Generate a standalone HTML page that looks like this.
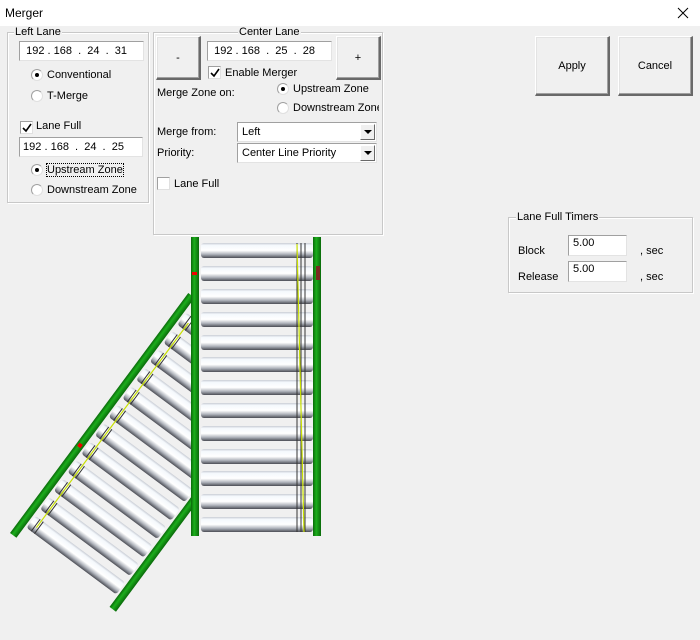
<!DOCTYPE html>
<html><head><meta charset="utf-8"><style>
*{margin:0;padding:0;box-sizing:border-box}
body{width:700px;height:640px;background:#f0f0f0;font-family:"Liberation Sans",sans-serif;font-size:11px;color:#000;position:relative;overflow:hidden}
.a{position:absolute;white-space:nowrap}
.title{left:0;top:0;width:700px;height:26px;background:#fff}
.gb{position:absolute;border:1px solid #c8c8c8;box-shadow:inset 1px 1px 0 #fff,1px 1px 0 #fff}
.gb>span{position:absolute;top:-7px;background:#f0f0f0;padding:0 1px;line-height:13px}
.ip{position:absolute;background:#fff;border:1px solid #a0a0a0;border-right-color:#e3e3e3;border-bottom-color:#e3e3e3;line-height:18px;font-size:11px}
.btn{position:absolute;background:#f0f0f0;border:1px solid #fff;border-right:2px solid #696969;border-bottom:2px solid #696969;box-shadow:inset -1px -1px 0 #a0a0a0, inset 1px 1px 0 #e3e3e3;text-align:center}
.rad{position:absolute;width:12px;height:12px;border-radius:50%;background:#fff;border:1px solid #a0a0a0;border-right-color:#e0e0e0;border-bottom-color:#e0e0e0}
.rad.on::after{content:"";position:absolute;left:3px;top:3px;width:4px;height:4px;border-radius:50%;background:#000}
.chk{position:absolute;width:13px;height:13px;background:#fff;border:1px solid #a0a0a0;border-right-color:#e0e0e0;border-bottom-color:#e0e0e0}
.combo{position:absolute;background:#fff;border:1px solid #a0a0a0;border-right-color:#e3e3e3;border-bottom-color:#e3e3e3;line-height:18px;padding-left:4px}
.combo i{position:absolute;right:1px;top:1px;width:15px;height:16px;background:#f0f0f0;border:1px solid #fff;border-right-color:#696969;border-bottom-color:#696969}
.combo i::after{content:"";position:absolute;left:3px;top:5px;border-left:4px solid transparent;border-right:4px solid transparent;border-top:4px solid #000}
</style></head><body>
<div class="a title"></div>
<div class="a" style="left:5px;top:6px;font-size:12px">Merger</div>
<svg class="a" style="left:677px;top:7px" width="12" height="12"><path d="M1 1L11 11M11 1L1 11" stroke="#000" stroke-width="1"/></svg>

<div class="gb" style="left:7px;top:32px;width:142px;height:171px"><span style="left:6px">Left Lane</span></div>
<div class="ip" style="left:19px;top:41px;width:125px;height:20px">&nbsp;&nbsp;192&nbsp;.&nbsp;168&nbsp;&nbsp;.&nbsp;&nbsp;24&nbsp;&nbsp;.&nbsp;&nbsp;31</div>
<div class="rad on" style="left:31px;top:69px"></div><div class="a" style="left:47px;top:69px">Conventional</div>
<div class="rad" style="left:31px;top:90px"></div><div class="a" style="left:47px;top:90px">T-Merge</div>
<div class="chk" style="left:20px;top:121px"></div><svg class="a" style="left:22px;top:123px" width="10" height="10"><path d="M1 5L4 8L9 1" stroke="#000" stroke-width="1.6" fill="none"/></svg><div class="a" style="left:36px;top:120px">Lane Full</div>
<div class="ip" style="left:19px;top:137px;width:124px;height:20px">&nbsp;192&nbsp;.&nbsp;168&nbsp;&nbsp;.&nbsp;&nbsp;24&nbsp;&nbsp;.&nbsp;&nbsp;25</div>
<div class="rad on" style="left:31px;top:164px"></div><div class="a" style="left:47px;top:164px;outline:1px dotted #000">Upstream Zone</div>
<div class="rad" style="left:31px;top:184px"></div><div class="a" style="left:47px;top:184px">Downstream Zone</div>

<div class="gb" style="left:153px;top:32px;width:230px;height:203px"><span style="left:84px">Center Lane</span></div>
<div class="btn" style="left:156px;top:36px;width:45px;height:44px;line-height:42px">-</div>
<div class="ip" style="left:207px;top:41px;width:125px;height:20px">&nbsp;&nbsp;192&nbsp;.&nbsp;168&nbsp;&nbsp;.&nbsp;&nbsp;25&nbsp;&nbsp;.&nbsp;&nbsp;28</div>
<div class="btn" style="left:336px;top:36px;width:45px;height:44px;line-height:42px">+</div>
<div class="chk" style="left:208px;top:66px"></div><svg class="a" style="left:210px;top:68px" width="10" height="10"><path d="M1 5L4 8L9 1" stroke="#000" stroke-width="1.6" fill="none"/></svg><div class="a" style="left:225px;top:67px">Enable Merger</div>
<div class="a" style="left:157px;top:87px">Merge Zone on:</div>
<div class="rad on" style="left:277px;top:83px"></div><div class="a" style="left:293px;top:83px">Upstream Zone</div>
<div class="rad" style="left:277px;top:102px"></div><div class="a" style="left:293px;top:102px;width:86px;overflow:hidden">Downstream Zone</div>
<div class="a" style="left:157px;top:126px">Merge from:</div>
<div class="combo" style="left:237px;top:122px;width:140px;height:20px">Left<i></i></div>
<div class="a" style="left:157px;top:147px">Priority:</div>
<div class="combo" style="left:237px;top:143px;width:140px;height:20px">Center Line Priority<i></i></div>
<div class="chk" style="left:157px;top:177px"></div><div class="a" style="left:174px;top:178px">Lane Full</div>

<div class="btn" style="left:535px;top:36px;width:75px;height:60px;line-height:58px">Apply</div>
<div class="btn" style="left:618px;top:36px;width:75px;height:60px;line-height:58px">Cancel</div>

<div class="gb" style="left:508px;top:217px;width:185px;height:76px"><span style="left:7px">Lane Full Timers</span></div>
<div class="a" style="left:518px;top:245px">Block</div>
<div class="ip" style="left:568px;top:235px;width:59px;height:21px;line-height:14px;padding-left:4px">5.00</div>
<div class="a" style="left:640px;top:245px">, sec</div>
<div class="a" style="left:518px;top:271px">Release</div>
<div class="ip" style="left:568px;top:261px;width:59px;height:21px;line-height:14px;padding-left:4px">5.00</div>
<div class="a" style="left:640px;top:271px">, sec</div>

<svg class="a" style="left:0;top:0" width="700" height="640">
<defs>
<linearGradient id="rg" x1="0" y1="0" x2="0" y2="1">
<stop offset="0" stop-color="#c8ccd4"/><stop offset="0.15" stop-color="#f4f8fc"/><stop offset="0.5" stop-color="#ffffff"/><stop offset="0.75" stop-color="#b0b4bc"/><stop offset="1" stop-color="#4a4c54"/>
</linearGradient>
<linearGradient id="rg2" x1="0" y1="0" x2="1" y2="0">
<stop offset="0" stop-color="#4a4c54"/><stop offset="0.25" stop-color="#b0b4bc"/><stop offset="0.5" stop-color="#ffffff"/><stop offset="0.85" stop-color="#f4f8fc"/><stop offset="1" stop-color="#c8ccd4"/>
</linearGradient>
<linearGradient id="gr" x1="0" y1="0" x2="1" y2="0">
<stop offset="0" stop-color="#0a6a0a"/><stop offset="0.4" stop-color="#1cae1c"/><stop offset="1" stop-color="#0a6a0a"/>
</linearGradient>
<linearGradient id="gr2" x1="0" y1="0" x2="0" y2="1">
<stop offset="0" stop-color="#0a6a0a"/><stop offset="0.4" stop-color="#1cae1c"/><stop offset="1" stop-color="#0a6a0a"/>
</linearGradient>
<clipPath id="cl"><rect x="0" y="0" width="191" height="640"/></clipPath>
</defs>
<g clip-path="url(#cl)">
<g transform="translate(10,533) rotate(-53.4)">
<g fill="url(#rg2)">
<rect x="14" y="10" width="15" height="112" rx="3"/>
<rect x="37" y="10" width="15" height="112" rx="3"/>
<rect x="60" y="10" width="15" height="112" rx="3"/>
<rect x="83" y="10" width="15" height="112" rx="3"/>
<rect x="106" y="10" width="15" height="112" rx="3"/>
<rect x="129" y="10" width="15" height="112" rx="3"/>
<rect x="152" y="10" width="15" height="112" rx="3"/>
<rect x="175" y="10" width="15" height="112" rx="3"/>
<rect x="198" y="10" width="15" height="112" rx="3"/>
<rect x="221" y="10" width="15" height="112" rx="3"/>
<rect x="244" y="10" width="15" height="112" rx="3"/>
<rect x="267" y="10" width="15" height="112" rx="3"/>
</g>
<g stroke="#333" stroke-width="1">
<path d="M14 16H29M14 20H29M37 16H52M37 20H52M60 16H75M60 20H75M83 16H98M83 20H98M106 16H121M106 20H121M129 16H144M129 20H144M152 16H167M152 20H167M175 16H190M175 20H190M198 16H213M198 20H213M221 16H236M221 20H236M244 16H259M244 20H259M267 16H282M267 20H282"/>
</g>
<path d="M20 18L275 18" stroke="#c8e000" stroke-width="1.2"/>
<rect x="0" y="0" width="299" height="8" fill="url(#gr2)"/>
<rect x="110" y="2" width="4" height="4" fill="#e00"/>
<rect x="0" y="124" width="299" height="8" fill="url(#gr2)"/>
</g>
</g>
<g fill="url(#rg)">
<rect x="201" y="243" width="112" height="15" rx="3"/>
<rect x="201" y="266" width="112" height="15" rx="3"/>
<rect x="201" y="289" width="112" height="15" rx="3"/>
<rect x="201" y="312" width="112" height="15" rx="3"/>
<rect x="201" y="335" width="112" height="15" rx="3"/>
<rect x="201" y="357" width="112" height="15" rx="3"/>
<rect x="201" y="380" width="112" height="15" rx="3"/>
<rect x="201" y="403" width="112" height="15" rx="3"/>
<rect x="201" y="426" width="112" height="15" rx="3"/>
<rect x="201" y="449" width="112" height="15" rx="3"/>
<rect x="201" y="471" width="112" height="15" rx="3"/>
<rect x="201" y="494" width="112" height="15" rx="3"/>
<rect x="201" y="517" width="112" height="15" rx="3"/>
</g>
<g stroke="#333" stroke-width="1">
<path d="M297 243V532M301 243V532M305 243V532"/>
</g>
<path d="M297 244L304 532" stroke="#c8e000" stroke-width="1.2"/>
<rect x="191" y="237" width="8" height="299" fill="url(#gr)"/>
<rect x="313" y="237" width="8" height="299" fill="url(#gr)"/>
<rect x="192" y="272" width="5" height="3" fill="#e00"/>
<rect x="316" y="266" width="4" height="14" fill="#7a2a20"/>
</svg>
</body></html>
